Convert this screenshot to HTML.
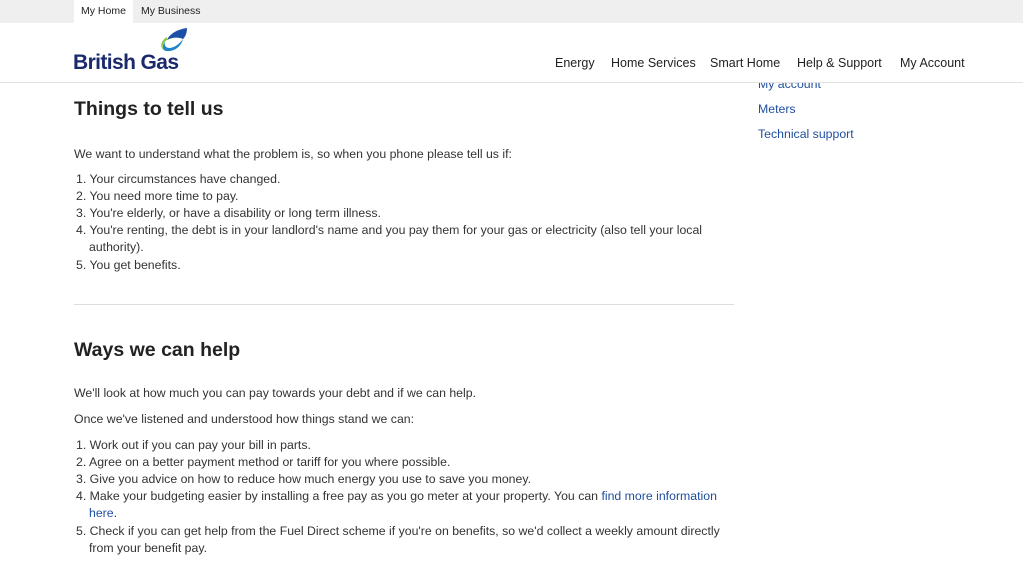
<!DOCTYPE html>
<html><head><meta charset="utf-8"><style>
*{margin:0;padding:0;box-sizing:border-box}
body{width:1023px;height:565px;overflow:hidden;background:#fff;font-family:"Liberation Sans",sans-serif;color:#333;position:relative}
.a{position:absolute;white-space:nowrap}
.t{font-size:12.3px;color:#333}
.h{font-size:19.5px;font-weight:bold;color:#222}
.l{color:#1f4fa0}
.nav{font-size:12.5px;color:#222;top:56px}
</style></head><body>
<div class="a" style="left:758px;top:77px;font-size:12.3px" ><span class="l">My account</span></div>
<div class="a l t" style="left:758px;top:102px">Meters</div>
<div class="a l t" style="left:758px;top:127px">Technical support</div>

<div class="a" style="left:0;top:0;width:1023px;height:23px;background:#efefef"></div>
<div class="a" style="left:74px;top:0;width:59px;height:23px;background:#fff"></div>
<div class="a" style="left:81px;top:5px;font-size:10.5px;color:#222">My Home</div>
<div class="a" style="left:141px;top:5px;font-size:10.5px;color:#222">My Business</div>
<div class="a" style="left:0;top:23px;width:1023px;height:60px;background:#fff;border-bottom:1px solid #e2e2e2"></div>
<svg class="a" style="left:157px;top:27px" width="32" height="30" viewBox="0 0 32 30">
<path d="M30 1 C22 2 13 6 10 13 C15 10 22 10 26 12 C29 9 30 5 30 1Z" fill="#1d4fa8"/>
<path d="M26 12 C24 20 17 25 9 24 C5 23 5 18 8 15 C7 19 9 21 13 21 C19 20 23 16 26 12Z" fill="#1e86c8"/>
<path d="M10 10 C3 14 2 22 9 24 C4 22 5 16 10 13Z" fill="#8cc63f"/>
</svg>
<div class="a" style="left:73px;top:51px;font-size:21px;font-weight:bold;color:#1b2a6b;letter-spacing:-0.6px">British Gas</div>
<div class="a nav" style="left:555px">Energy</div>
<div class="a nav" style="left:611px">Home Services</div>
<div class="a nav" style="left:710px">Smart Home</div>
<div class="a nav" style="left:797px">Help &amp; Support</div>
<div class="a nav" style="left:900px">My Account</div>

<div class="a h" style="left:74px;top:98px">Things to tell us</div>
<div class="a t" style="left:74px;top:147px">We want to understand what the problem is, so when you phone please tell us if:</div>
<div class="a t" style="left:76px;top:172px">1. Your circumstances have changed.</div>
<div class="a t" style="left:76px;top:189px">2. You need more time to pay.</div>
<div class="a t" style="left:76px;top:206px">3. You're elderly, or have a disability or long term illness.</div>
<div class="a t" style="left:76px;top:223px">4. You're renting, the debt is in your landlord's name and you pay them for your gas or electricity (also tell your local</div>
<div class="a t" style="left:89px;top:240px">authority).</div>
<div class="a t" style="left:76px;top:258px">5. You get benefits.</div>
<div class="a" style="left:74px;top:304px;width:660px;height:1px;background:#ddd"></div>
<div class="a h" style="left:74px;top:339px">Ways we can help</div>
<div class="a t" style="left:74px;top:386px">We'll look at how much you can pay towards your debt and if we can help.</div>
<div class="a t" style="left:74px;top:412px">Once we've listened and understood how things stand we can:</div>
<div class="a t" style="left:76px;top:438px">1. Work out if you can pay your bill in parts.</div>
<div class="a t" style="left:76px;top:455px">2. Agree on a better payment method or tariff for you where possible.</div>
<div class="a t" style="left:76px;top:472px">3. Give you advice on how to reduce how much energy you use to save you money.</div>
<div class="a t" style="left:76px;top:489px">4. Make your budgeting easier by installing a free pay as you go meter at your property. You can <span class="l">find more information</span></div>
<div class="a t l" style="left:89px;top:506px">here<span style="color:#333">.</span></div>
<div class="a t" style="left:76px;top:524px">5. Check if you can get help from the Fuel Direct scheme if you're on benefits, so we'd collect a weekly amount directly</div>
<div class="a t" style="left:89px;top:541px">from your benefit pay.</div>
</body></html>
